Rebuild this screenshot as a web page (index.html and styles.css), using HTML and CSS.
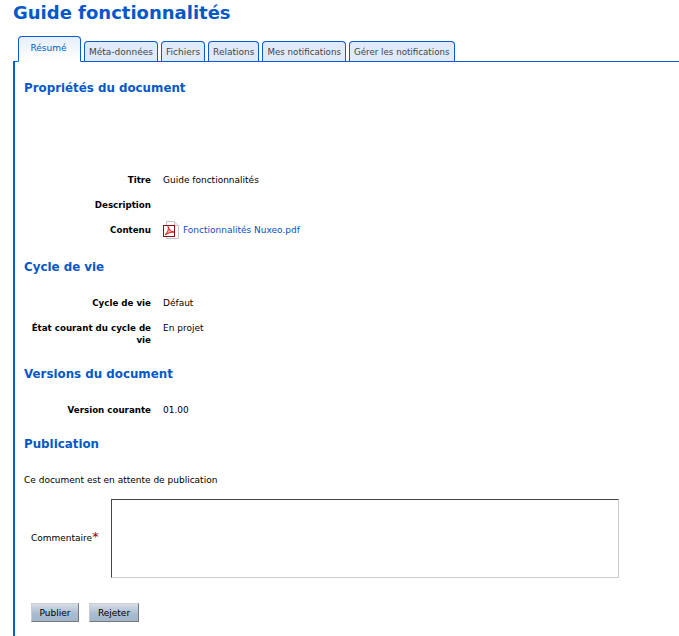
FILE: index.html
```html
<!DOCTYPE html>
<html lang="fr">
<head>
    <meta charset="UTF-8">
    <title>Guide fonctionnalités</title>
    <link rel="stylesheet" href="styles.css">
</head>
<body>
<h1 class="pageTitle">Guide fonctionnalités</h1>
<ul class="tabs">
    <li class="active"><a href="#">Résumé</a></li>
    <li><a href="#">Méta-données</a></li>
    <li><a href="#">Fichiers</a></li>
    <li><a href="#">Relations</a></li>
    <li class="longTab"><a href="#">Mes notifications</a></li>
    <li class="longTab"><a href="#">Gérer les notifications</a></li>
</ul>
<div class="content">
    <h2 class="first">Propriétés du document</h2>
    <div class="props propsDoc">
        <div class="label">Titre</div>
        <div class="value">Guide fonctionnalités</div>
        <div class="label">Description</div>
        <div class="value"></div>
        <div class="label">Contenu</div>
        <div class="value fileRow">
            <svg class="pdfIcon" width="16" height="18" viewBox="0 0 16 18">
                <path d="M3.5 .5H11.5L15.5 4.5V17.5H3.5Z" fill="#fff" stroke="#c4c4c4"/>
                <path d="M11.5 .5V4.5H15.5" fill="#f0f0f0" stroke="#c4c4c4"/>
                <rect x=".5" y="4.5" width="11" height="11" fill="#fff" stroke="#8c1010"/>
                <path d="M2 14C4.5 11.5 6 8 5 5.5C6.5 9 8 11 11 11C8 11 5 12 2 14Z" fill="#f6a0a0" stroke="#e01414"/>
            </svg>
            <a href="#">Fonctionnalités Nuxeo.pdf</a>
        </div>
    </div>
    <h2>Cycle de vie</h2>
    <div class="props propsCycle">
        <div class="label">Cycle de vie</div>
        <div class="value">Défaut</div>
        <div class="label">État courant du cycle de vie</div>
        <div class="value">En projet</div>
    </div>
    <h2>Versions du document</h2>
    <div class="props propsVersion">
        <div class="label">Version courante</div>
        <div class="value">01.00</div>
    </div>
    <h2>Publication</h2>
    <p class="pubNote">Ce document est en attente de publication</p>
    <div class="commentRow">
        <label for="comment">Commentaire<span class="req">*</span></label>
        <textarea id="comment"></textarea>
    </div>
    <div class="buttons">
        <button type="button" class="publish">Publier</button>
        <button type="button" class="reject">Rejeter</button>
    </div>
</div>
</body>
</html>
```

FILE: styles.css
```css
*{
    margin: 0;
    padding: 0;
    box-sizing: border-box;
}
html,body
{
    height: 636px;
    overflow: hidden;
}
body
{
    background: #fff;
    color: #000;
    font-family: "DejaVu Sans", Verdana, sans-serif;
    font-size: 9px;
}
a
{
    color: #0b4fbf;
    text-decoration: none;
}
.pageTitle
{
    height: 36px;
    padding: 1px 0 0 13px;
    font-size: 18px;
    line-height: 24px;
    color: #0658c8;
}
.tabs
{
    list-style: none;
    display: flex;
    align-items: flex-end;
    gap: 3px;
    height: 25px;
    margin-left: 18px;
}
.tabs li
{
    height: 20px;
    border: 1px solid #0a5ad6;
    border-bottom: 0;
    border-radius: 4px 4px 0 0;
    background: #e0eafb;
    padding: 0 4px;
    line-height: 20px;
}
.tabs li a
{
    color: #444;
}
.tabs li.longTab
{
    font-size: 8.7px;
}
.tabs li.active
{
    width: 63px;
    height: 26px;
    margin-bottom: -1px;
    padding-right: 6px;
    border-bottom: 1px solid #fff;
    background: linear-gradient(#e6effc, #fff);
    text-align: center;
    line-height: 23px;
    position: relative;
}
.tabs li.active a
{
    color: #0b5cc4;
}
.content
{
    height: 575px;
    margin-left: 13px;
    border-left: 2px solid #0a5ad6;
    border-top: 1px solid #0a5ad6;
    padding-left: 9px;
}
h2
{
    font-size: 11.85px;
    line-height: 16px;
    color: #0658c8;
}
h2.first
{
    margin-top: 18px;
}
.props
{
    display: grid;
    grid-template-columns: 127px 1fr;
    column-gap: 12px;
    row-gap: 13px;
    line-height: 12px;
}
.propsDoc
{
    margin: 78px 0 23px;
}
.propsCycle
{
    margin: 22px 0 20px;
}
.propsVersion
{
    margin: 22px 0 20px;
}
.label
{
    font-size: 8.7px;
    font-weight: bold;
    text-align: right;
}
.fileRow
{
    display: flex;
    align-items: center;
    gap: 4px;
    height: 12px;
}
.pubNote
{
    margin-top: 22px;
    line-height: 12px;
}
.commentRow
{
    display: flex;
    align-items: center;
    margin-top: 13px;
}
.commentRow label
{
    width: 87px;
    padding: 0 0 2px 7px;
}
.req
{
    color: #900;
    font-size: 13px;
    line-height: 10px;
}
textarea
{
    display: block;
    width: 508px;
    height: 79px;
    border: 1px solid #ccc;
    border-top-color: #444;
    border-left-color: #444;
    resize: none;
    background: #fff;
}
.buttons
{
    display: flex;
    gap: 10px;
    margin: 25px 0 0 7px;
}
button
{
    height: 19px;
    font-family: inherit;
    font-size: 9px;
    color: #000;
    background: linear-gradient(#d6dee8, #a9bcd2 55%, #a2b5cb);
    border: 1px solid;
    border-color: #ccc #777 #777 #ccc;
}
.publish
{
    width: 48px;
}
.reject
{
    width: 50px;
}
```
